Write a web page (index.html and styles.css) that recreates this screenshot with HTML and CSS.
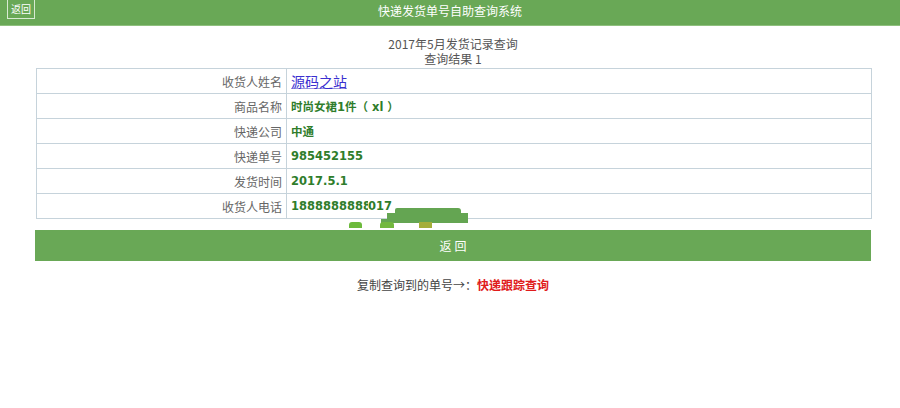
FILE: index.html
```html
<!DOCTYPE html>
<html lang="zh-CN">
<head>
<meta charset="utf-8">
<title>快递发货单号自助查询系统</title>
<link rel="stylesheet" href="styles.css">
</head>
<body>
<header class="topbar">
  <a class="back-btn" href="#">返回</a>
  <h1 class="title">快递发货单号自助查询系统</h1>
</header>
<main class="content">
  <div class="caption">
    <div>2017年5月发货记录查询</div>
    <div>查询结果 1</div>
  </div>
  <div class="result-wrap">
    <table class="result">
      <tr><th>收货人姓名</th><td><a class="name" href="#">源码之站</a></td></tr>
      <tr><th>商品名称</th><td class="val">时尚女裙1件（ xl ）</td></tr>
      <tr><th>快递公司</th><td class="val">中通</td></tr>
      <tr><th>快递单号</th><td class="val">985452155</td></tr>
      <tr><th>发货时间</th><td class="val">2017.5.1</td></tr>
      <tr><th>收货人电话</th><td class="val">188888888<span class="cut">8</span>017</td></tr>
    </table>
    <div class="glitch">
      <div class="g g1"></div>
      <div class="g g2"></div>
      <div class="g g3"></div>
      <div class="g g4"></div>
      <div class="g g5"></div>
      <div class="g g6"></div>
      <div class="w w1"></div>
    </div>
  </div>
  <a class="return-bar" href="#">返回</a>
  <p class="copy-tip">复制查询到的单号→：<a class="track" href="#">快递跟踪查询</a></p>
</main>
</body>
</html>
```
FILE: styles.css
```css
html, body {
  margin: 0;
  padding: 0;
  background: #ffffff;
  font-family: "Noto Sans CJK SC", "Noto Sans", sans-serif;
  font-size: 12px;
  color: #555555;
}

.topbar {
  position: relative;
  height: 25px;
  background: #69a856;
  border-bottom: 1px solid #8fc07e;
  display: flex;
  align-items: center;
  justify-content: center;
}

.back-btn {
  position: absolute;
  left: 7px;
  top: 0;
  width: 26px;
  height: 18px;
  border: 1px solid #d8ead2;
  border-top: none;
  color: #ffffff;
  font-size: 10px;
  line-height: 18px;
  text-align: center;
  text-decoration: none;
}

.title {
  margin: 0;
  font-size: 12px;
  font-weight: normal;
  color: #ffffff;
  line-height: 20px;
  margin-top: -3px;
}

.content {
  margin: 0 29px 0 35px;
}

.caption {
  padding-top: 10px;
  text-align: center;
  line-height: 15px;
  font-size: 12px;
  color: #555555;
  margin-bottom: 2px;
}

.result-wrap {
  position: relative;
}

.result {
  width: 836px;
  margin-left: 1px;
  border-collapse: collapse;
  border: 1px solid #b9c9d3;
}

.result th,
.result td {
  height: 24px;
  padding: 0 4px;
  border: 1px solid #c6d3db;
  vertical-align: middle;
}

.result th {
  width: 241px;
  text-align: right;
  font-weight: normal;
  color: #666666;
  font-size: 12px;
}

.result td {
  text-align: left;
}

.name {
  color: #3a2fd0;
  font-size: 14px;
  text-decoration: underline;
  text-decoration-color: #9b96e0;
}

.val {
  color: #2f7d2b;
  font-family: "DejaVu Sans", "Noto Sans CJK SC", sans-serif;
  font-weight: bold;
  font-size: 11.5px;
}

.cut {
  display: inline-block;
  width: 5px;
  overflow: hidden;
  vertical-align: bottom;
}

.glitch {
  position: absolute;
  left: 0;
  top: 0;
  width: 100%;
  height: 170px;
  pointer-events: none;
}

.g {
  position: absolute;
  background: #64a552;
}

.g1 { left: 360px; top: 140px; width: 66px; height: 8px; border-radius: 2px 3px 0 0; }
.g2 { left: 352px; top: 145px; width: 81px; height: 10px; }
.g3 { left: 346px; top: 151px; width: 60px; height: 4px; }
.g4 { left: 314px; top: 154px; width: 13px; height: 6px; background: #6dba3c; border-radius: 3px 3px 0 0; }
.g5 { left: 345px; top: 154px; width: 14px; height: 6px; background: #72b83e; border-radius: 3px 3px 0 0; }
.g6 { left: 384px; top: 154px; width: 13px; height: 6px; background: #a4ae3a; }

.w {
  position: absolute;
  background: #ffffff;
}

.w1 { left: 330px; top: 123px; width: 140px; height: 2px; }

.return-bar {
  display: block;
  width: 836px;
  height: 31px;
  margin-top: 11px;
  background: #69a856;
  color: #ffffff;
  font-size: 12px;
  line-height: 31px;
  text-align: center;
  text-decoration: none;
  letter-spacing: 3px;
  text-indent: 3px;
}

.copy-tip {
  margin: 16px 0 0;
  text-align: center;
  font-size: 12px;
  line-height: 16px;
  color: #444444;
}

.track {
  color: #e01b1b;
  font-weight: bold;
  text-decoration: none;
}
```
